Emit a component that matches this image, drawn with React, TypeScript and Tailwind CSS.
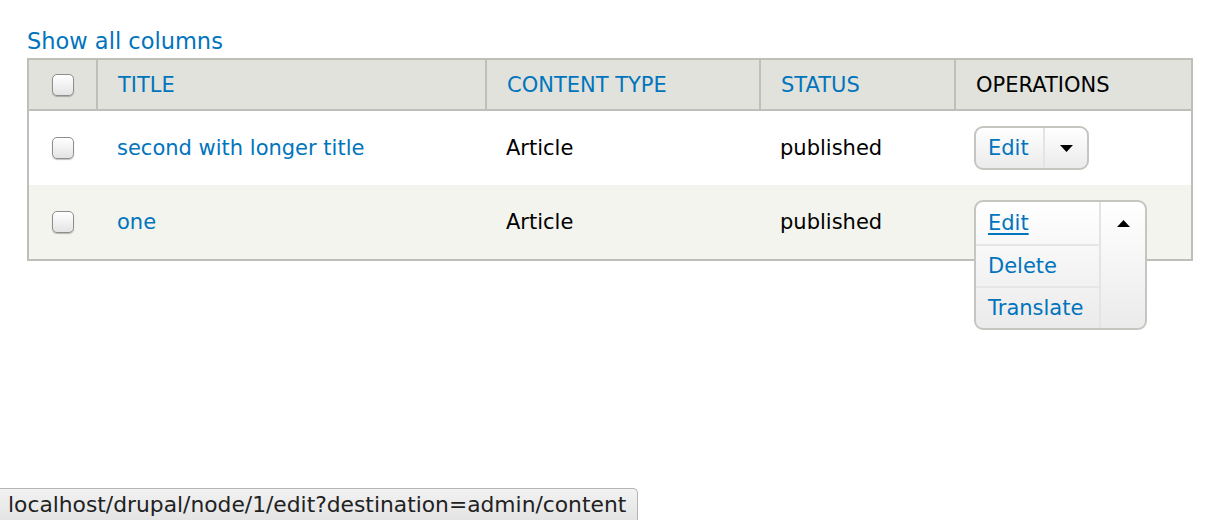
import { useState } from 'react'

interface Row {
  title: string
  type: string
  status: string
  open?: boolean
}

const rows: Row[] = [
  { title: 'second with longer title', type: 'Article', status: 'published' },
  { title: 'one', type: 'Article', status: 'published', open: true },
]

const Checkbox = () => (
  <span className="block w-[22px] h-[22px] rounded-[5px] border border-[#8e8e8e] bg-gradient-to-b from-white to-[#e4e4e4] shadow-[0_1px_1px_rgba(0,0,0,0.25)]" />
)

const TriangleDown = () => (
  <svg width="13" height="7" viewBox="0 0 13 7">
    <path d="M0 0h13L6.5 7z" fill="#000" />
  </svg>
)

const TriangleUp = () => (
  <svg width="13" height="7" viewBox="0 0 13 7">
    <path d="M0 7h13L6.5 0z" fill="#000" />
  </svg>
)

const DropButton = ({ open }: { open?: boolean }) => {
  if (!open) {
    return (
      <div className="flex h-[44px] w-[115px] rounded-[9px] border-2 border-[#c6c6c0] bg-gradient-to-b from-white to-[#ebebeb] overflow-hidden">
        <a className="flex items-center pt-[2px] pl-[12px] w-[69px] border-r-2 border-[#e4e4e2] text-[#0074bd]">Edit</a>
        <span className="flex-1 flex items-center justify-center">
          <TriangleDown />
        </span>
      </div>
    )
  }

  return (
    <div className="relative h-[44px]">
      <div className="absolute left-0 top-0 z-10 flex w-[173px] rounded-[9px] border-2 border-[#c6c6c0] bg-gradient-to-b from-white to-[#ebebeb] overflow-hidden">
        <ul className="w-[125px] border-r-2 border-[#e4e4e2]">
          {['Edit', 'Delete', 'Translate'].map((item, i) => (
            <li
              key={item}
              className={`h-[42px] flex items-center pt-[2px] pl-[12px] ${i > 0 ? 'border-t-2 border-[#e6e6e4]' : ''}`}
            >
              <a className={`text-[#0074bd] ${i === 0 ? 'underline underline-offset-[3px] decoration-2' : ''}`}>{item}</a>
            </li>
          ))}
        </ul>
        <span className="flex-1 flex justify-center pt-[18px]">
          <TriangleUp />
        </span>
      </div>
    </div>
  )
}

export default function App() {
  const [checked] = useState(false)

  return (
    <div className="relative w-[1214px] h-[520px] bg-white text-black font-['DejaVu_Sans',sans-serif] text-[21px] overflow-hidden">
      <div className="pt-[27px] pl-[27px] pr-[21px]">
        <a className="block h-[31px] text-[22.5px] leading-[28px] text-[#0074bd]">Show all columns</a>

        <table className="w-[1166px] border-collapse border-2 border-[#bfbfb9] table-fixed">
          <colgroup>
            <col className="w-[69px]" />
            <col className="w-[389px]" />
            <col className="w-[274px]" />
            <col className="w-[195px]" />
            <col />
          </colgroup>
          <thead>
            <tr className="h-[51px] bg-[#e1e2dc] border-b-2 border-[#bfbfb9]">
              <th className="border-r-2 border-[#bfbfb9]">
                <div className="flex justify-center">{!checked && <Checkbox />}</div>
              </th>
              <th className="border-r-2 border-[#bfbfb9] pl-[20px] pt-[2px] text-left font-normal text-[#0074bd]">TITLE</th>
              <th className="border-r-2 border-[#bfbfb9] pl-[20px] pt-[2px] text-left font-normal text-[#0074bd]">CONTENT TYPE</th>
              <th className="border-r-2 border-[#bfbfb9] pl-[20px] pt-[2px] text-left font-normal text-[#0074bd]">STATUS</th>
              <th className="pl-[20px] pt-[2px] text-left font-normal">OPERATIONS</th>
            </tr>
          </thead>
          <tbody>
            {rows.map((row, i) => (
              <tr key={row.title} className={`h-[75px] ${i % 2 === 1 ? 'bg-[#f3f4ee]' : 'bg-white'}`}>
                <td>
                  <div className="flex justify-center">
                    <Checkbox />
                  </div>
                </td>
                <td className="pl-[20px] pt-[2px]">
                  <a className="text-[#0074bd]">{row.title}</a>
                </td>
                <td className="pl-[20px] pt-[2px]">{row.type}</td>
                <td className="pl-[20px] pt-[2px]">{row.status}</td>
                <td className="pl-[19px]">
                  <DropButton open={row.open} />
                </td>
              </tr>
            ))}
          </tbody>
        </table>
      </div>

      {/* status bar */}
      <div className="absolute left-0 bottom-0 h-[32px] w-[638px] rounded-tr-[5px] border-t border-r border-[#b5b5b5] bg-gradient-to-b from-[#f2f2f2] to-[#e4e4e4] pl-[8px] text-[21.8px] leading-[31px] text-[#222] whitespace-nowrap">
        localhost/drupal/node/1/edit?destination=admin/content
      </div>
    </div>
  )
}
